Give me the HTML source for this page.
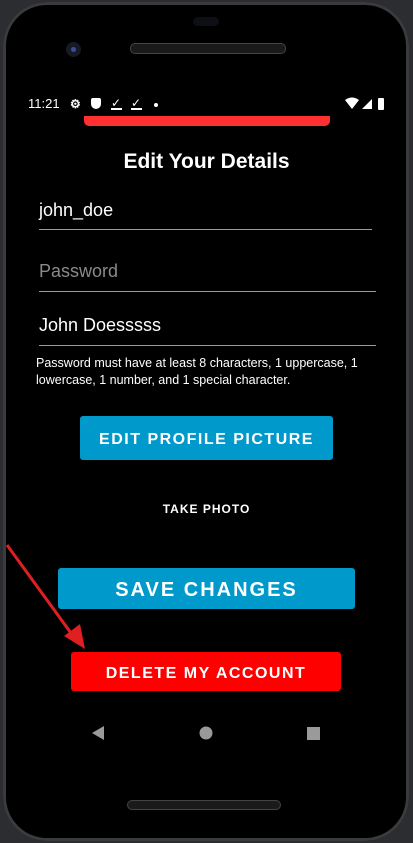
<!DOCTYPE html>
<html><head><style>
body{margin:0;width:413px;height:843px;background:#2b2d30;overflow:hidden;position:relative;font-family:"Liberation Sans",Roboto,sans-serif;color:#fff}
.phone{position:absolute;left:3px;top:2px;width:406px;height:839px;background:#000;border-radius:44px;box-shadow:inset 0 0 0 3px #3a3b3d}
.a{position:absolute}
.btn{position:absolute;display:flex;align-items:center;justify-content:center;color:#fff;border-radius:3px;letter-spacing:1.5px;font-weight:bold;box-sizing:border-box;padding-top:4px}
.line{position:absolute;height:1px;background:#9a9a9a}
</style></head><body>
<div class="phone"></div>
<div class="a" style="left:193px;top:17px;width:26px;height:9px;background:#0d0f14;border-radius:5px"></div>
<div class="a" style="left:130px;top:43px;width:154px;height:9px;background:#1a1a1a;border:1px solid #444;border-radius:5px"></div>
<div class="a" style="left:66px;top:42px;width:15px;height:15px;background:#161a24;border-radius:50%"><div style="margin:5px;width:5px;height:5px;background:#3a4ca0;border-radius:50%"></div></div>
<div class="a" style="left:28px;top:96px;font-size:13px">11:21</div>
<div class="a" style="left:70px;top:97px;font-size:12px;font-weight:bold">⚙</div>
<div class="a" style="left:91px;top:98px;width:10px;height:11px;background:#fff;border-radius:2px 2px 5px 5px"></div>
<div class="a" style="left:111px;top:96px;font-size:12px">✓</div>
<div class="a" style="left:111px;top:108px;width:11px;height:1.5px;background:#fff"></div>
<div class="a" style="left:131px;top:96px;font-size:12px">✓</div>
<div class="a" style="left:131px;top:108px;width:11px;height:1.5px;background:#fff"></div>
<div class="a" style="left:154px;top:103px;width:4px;height:4px;background:#fff;border-radius:50%"></div>
<svg class="a" style="left:345px;top:97px" width="40" height="14"><path d="M0 3 Q7 -2 14 3 L7 12Z" fill="#fff"/><path d="M17 12 L27 2 L27 12Z" fill="#fff"/><rect x="33" y="1" width="6" height="12" rx="1" fill="#fff"/></svg>
<div class="a" style="left:84px;top:116px;width:246px;height:10px;background:#ff3030;border-radius:0 0 5px 5px"></div>
<div class="a" style="left:0;width:413px;top:150px;text-align:center;font-size:21px;font-weight:bold">Edit Your Details</div>
<div class="a" style="left:39px;top:200px;font-size:18px">john_doe</div>
<div class="line" style="left:39px;top:229px;width:333px"></div>
<div class="a" style="left:39px;top:261px;font-size:18px;color:#8a8a8a">Password</div>
<div class="line" style="left:39px;top:291px;width:337px"></div>
<div class="a" style="left:39px;top:315px;font-size:18px">John Doesssss</div>
<div class="line" style="left:39px;top:345px;width:337px"></div>
<div class="a" style="left:36px;top:355px;width:350px;font-size:12.5px;line-height:17px">Password must have at least 8 characters, 1 uppercase, 1 lowercase, 1 number, and 1 special character.</div>
<div class="btn" style="left:80px;top:416px;width:253px;height:44px;background:#0099cc;font-size:16px">EDIT PROFILE PICTURE</div>
<div class="a" style="left:0;width:413px;top:502px;text-align:center;font-size:12px;font-weight:bold;letter-spacing:1px">TAKE PHOTO</div>
<div class="btn" style="left:58px;top:568px;width:297px;height:41px;background:#0099cc;font-size:20px;letter-spacing:2px">SAVE CHANGES</div>
<div class="btn" style="left:71px;top:652px;width:270px;height:39px;background:#ff0000;font-size:16px">DELETE MY ACCOUNT</div>
<svg class="a" style="left:0;top:0" width="413" height="843"><line x1="7" y1="545" x2="76" y2="640" stroke="#e02020" stroke-width="3"/><path d="M85 649 L64 636 L80 624Z" fill="#e02020"/>
<path d="M92 733 L104 726 L104 740Z" fill="#9a9a9a"/><circle cx="206" cy="733" r="6.5" fill="#9a9a9a"/><rect x="307" y="727" width="13" height="13" fill="#9a9a9a"/></svg>
<div class="a" style="left:127px;top:800px;width:152px;height:8px;background:#1a1a1a;border:1px solid #444;border-radius:5px"></div>
</body></html>
